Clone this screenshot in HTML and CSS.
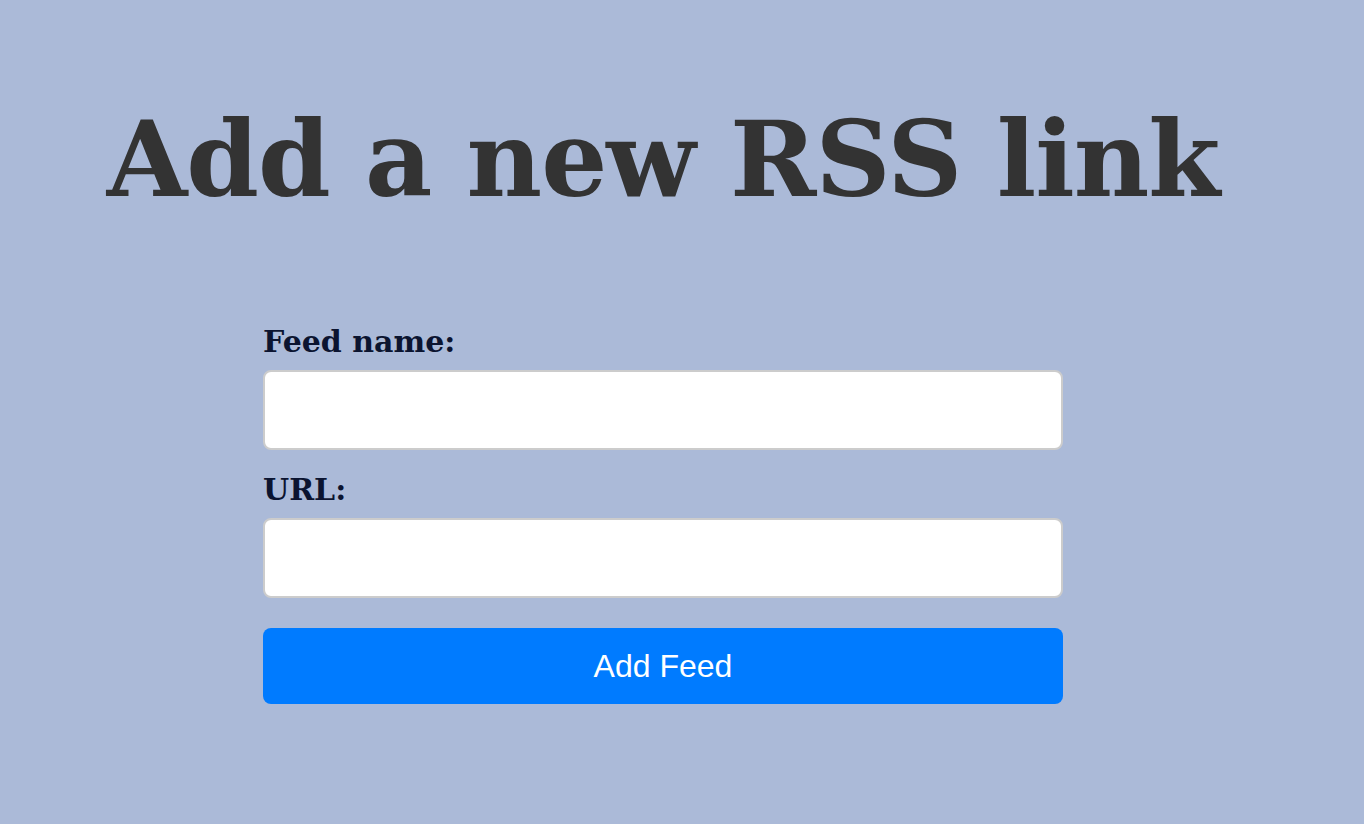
FILE: index.html
```html
<!DOCTYPE html>
<html lang="en">
<head>
<meta charset="utf-8">
<title>Add a new RSS link</title>
<link rel="stylesheet" href="styles.css">
</head>
<body>
<main class="page">
  <h1 class="title">Add a new RSS link</h1>
  <form class="feed-form">
    <label class="field-label" for="name">Feed name:</label>
    <input class="field-input" id="name" type="text">
    <label class="field-label" for="url">URL:</label>
    <input class="field-input" id="url" type="text">
    <button class="submit" type="button">Add Feed</button>
  </form>
</main>
</body>
</html>
```
FILE: styles.css
```css
html, body {
  margin: 0;
  padding: 0;
  background: #abbad8;
  height: 100%;
}
.page {
  width: 1326px;
  display: flex;
  flex-direction: column;
  align-items: center;
  padding-top: 100px;
}
.title {
  margin: 0;
  font-family: "DejaVu Serif", Georgia, serif;
  font-weight: bold;
  font-size: 104px;
  line-height: 120px;
  color: #333333;
  letter-spacing: -1px;
}
.feed-form {
  width: 800px;
  display: flex;
  flex-direction: column;
  margin-top: 102px;
}
.field-label {
  font-family: "DejaVu Serif", Georgia, serif;
  font-weight: bold;
  font-size: 30px;
  line-height: 40px;
  color: #0b1430;
  margin-bottom: 8px;
}
.field-input {
  box-sizing: border-box;
  height: 80px;
  border: 2px solid #cccccc;
  border-radius: 8px;
  background: #fff;
  margin: 0 0 20px 0;
  font-size: 24px;
  padding: 0 12px;
}
.submit {
  height: 76px;
  margin-top: 10px;
  border: none;
  border-radius: 8px;
  background: #007bff;
  color: #fff;
  font-family: "Liberation Sans", Arial, sans-serif;
  font-size: 32px;
}
```
